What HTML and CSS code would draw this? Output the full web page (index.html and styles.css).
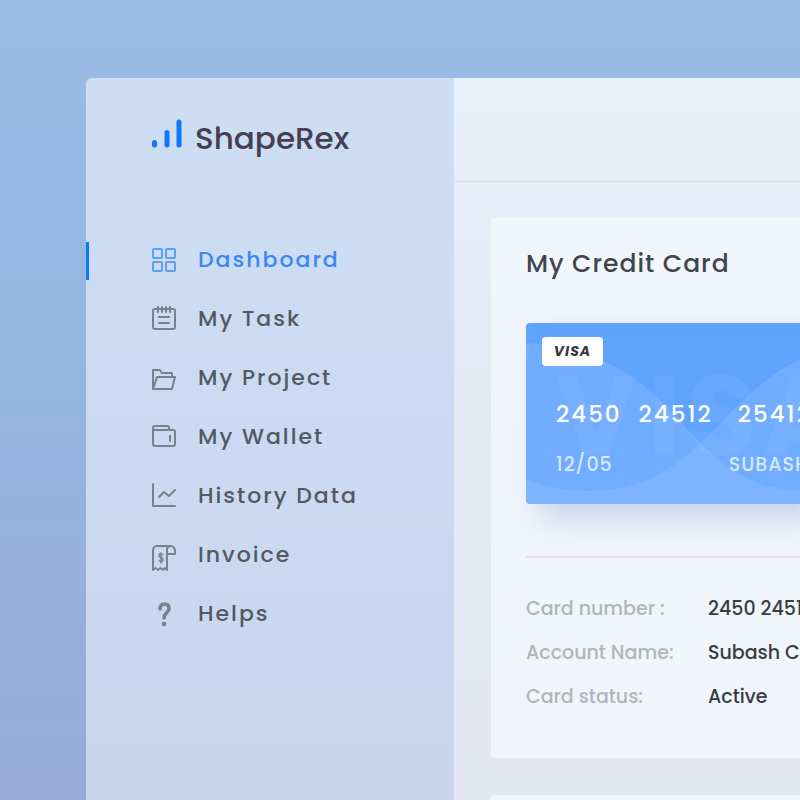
FILE: index.html
```html
<!DOCTYPE html>
<html lang="en">
<head>
<meta charset="utf-8">
<meta name="viewport" content="width=device-width, initial-scale=1">
<title>ShapeRex</title>
<link rel="stylesheet" href="styles.css">
</head>
<body>
<div class="window">
  <aside class="sidebar">
    <a class="brand" href="#">
      <svg class="brand-mark" viewBox="0 0 32 32" aria-hidden="true"><path d="M3.500 24.500v2.500M16 14.500v12.500M28 4v23"/></svg>
      <span>ShapeRex</span>
    </a>
    <nav class="menu">
      <a class="item active" href="#">
        <svg viewBox="0 0 26 26" aria-hidden="true"><rect x="2" y="2" width="9" height="9" rx="1"/><rect x="15" y="2" width="9" height="9" rx="1"/><rect x="2" y="15" width="9" height="9" rx="1"/><rect x="15" y="15" width="9" height="9" rx="1"/></svg>
        <span>Dashboard</span>
      </a>
      <a class="item" href="#">
        <svg viewBox="0 0 26 26" aria-hidden="true"><rect x="2" y="3" width="22" height="20" rx="2"/><path d="M7 1v5M11 1v5M15 1v5M19 1v5M8 11h10M8 17h10"/></svg>
        <span>My Task</span>
      </a>
      <a class="item" href="#">
        <svg viewBox="0 0 26 26" aria-hidden="true"><path d="M2 24V5h7l2 3h10v4M2 24l4-12h18l-3 12z"/></svg>
        <span>My Project</span>
      </a>
      <a class="item" href="#">
        <svg viewBox="0 0 26 26" aria-hidden="true"><path d="M2 4a2 2 0 0 1 2-2h12a2 2 0 0 1 2 2v2h4a2 2 0 0 1 2 2V20a2 2 0 0 1-2 2H4a2 2 0 0 1-2-2zM2 4q0 2 2 2h14M19 12v5"/></svg>
        <span>My Wallet</span>
      </a>
      <a class="item" href="#">
        <svg viewBox="0 0 26 26" aria-hidden="true"><path d="M2 1v22h22M8 14l5-5 5 4 6-6"/></svg>
        <span>History Data</span>
      </a>
      <a class="item" href="#">
        <svg viewBox="0 0 26 26" aria-hidden="true"><path d="M20 4H6a4 4 0 0 0-4 4v20l2.500-2 2.500 2 2.500-2 2.500 2 2-2 2 2V8q0-4 3.500-4T24 8v4h-8"/><path class="thin" d="M12 12.500q-4-2-4 1 0 1.500 2 2 2.500 1 2 3-1 2-4 0M10 11v10"/></svg>
        <span>Invoice</span>
      </a>
      <a class="item" href="#">
        <svg viewBox="0 0 26 26" aria-hidden="true"><path class="bold" d="M9 8q0-5 4.500-5T18 7.500c0 4-5 4-5 9.500"/><circle class="dot" cx="13" cy="23" r="2.300"/></svg>
        <span>Helps</span>
      </a>
    </nav>
  </aside>
  <div class="main">
    <header class="topbar"></header>
    <main class="content">
      <section class="panel">
        <h1>My Credit Card</h1>
        <div class="card">
          <svg class="card-art" viewBox="0 0 600 181" preserveAspectRatio="xMinYMin slice" aria-hidden="true">
            <path class="wave" d="M0 20C70 22 112 54 146 89C176 120 207 168 280 168S420 60 600 20V182H0z"/>
            <path class="wave" d="M0 156Q30 168 61 168C120 168 153 142 183 112C214 79 244 48 280 34S480 20 600 156V182H0z"/>
            <text class="watermark" x="29 122 161 236" y="132">VISA</text>
          </svg>
          <span class="visa">VISA</span>
          <div class="number"><span>2450</span><span>24512</span><span>25412</span></div>
          <div class="holder"><span>12/05</span><span>SUBASH</span></div>
        </div>
        <dl class="details">
          <dt>Card number :</dt><dd>2450 24512</dd>
          <dt>Account Name:</dt><dd>Subash Ch</dd>
          <dt>Card status:</dt><dd>Active</dd>
        </dl>
      </section>
      <section class="panel"></section>
    </main>
  </div>
</div>
</body>
</html>
```
FILE: styles.css
```css
* { box-sizing: border-box; }
body {
  margin: 0;
  height: 100vh;
  overflow: hidden;
  padding: 78px 0 0 86px;
  font-family: Poppins, Inter, sans-serif;
  font-weight: 500;
  background: linear-gradient(180deg, #99bbe6 0%, #95b5e1 50%, #96aad9 100%);
}
a { color: inherit; text-decoration: none; }
.window {
  display: flex;
  height: 100%;
  overflow: hidden;
  border-radius: 6px 0 0 0;
}
.sidebar {
  flex: 0 0 368px;
  background: linear-gradient(180deg, #cddef3, #cbdaf2 50%, #cad4ed);
}
.brand {
  display: flex;
  align-items: center;
  gap: 12px;
  height: 120px;
  padding-left: 65px;
  font-size: 31px;
  color: #463f52;
}
.brand-mark {
  width: 32px;
  height: 32px;
  margin-bottom: 8px;
  fill: none;
  stroke: #0f77fb;
  stroke-width: 5;
  stroke-linecap: round;
}
.menu { padding-top: 44px; }
.item {
  display: flex;
  align-items: center;
  gap: 21px;
  height: 38px;
  margin-bottom: 21px;
  padding: 0 0 4px 62px;
  border-left: 3px solid transparent;
  font-size: 22px;
  letter-spacing: 2px;
  color: #535961;
}
.item svg {
  width: 26px;
  height: 26px;
  margin-top: 2px;
  overflow: visible;
  fill: none;
  stroke: #77828f;
  stroke-width: 2;
  stroke-linejoin: round;
  stroke-linecap: round;
}
.item .thin { stroke-width: 1.5; }
.item .bold { stroke-width: 3.5; }
.item .dot { fill: #77828f; stroke: none; }
.item.active { border-color: #0f77fb; color: #3b86f7; }
.item.active svg { stroke: #5e9ff5; }
.main {
  flex: 1;
  min-width: 0;
  background: linear-gradient(180deg, #e9f1fb, #e5ebf6 30%, #e3e7f1);
}
.topbar { height: 104px; border-bottom: 1px solid #ead8d8; }
.content {
  display: flex;
  flex-direction: column;
  gap: 37px;
  padding: 36px 0 0 37px;
}
.panel {
  min-height: 40px;
  padding-left: 35px;
  border-radius: 4px 0 0 4px;
  background: linear-gradient(180deg, #f1f6fc, #f0f4fc 50%, #f1f5fb);
}
h1 {
  margin: 0;
  padding: 30px 0 43px;
  font-size: 25px;
  line-height: 32px;
  font-weight: 500;
  letter-spacing: 1px;
  color: #40454c;
}
.card {
  position: relative;
  height: 181px;
  padding: 14px 0 0 16px;
  border-radius: 4px 0 0 4px;
  background: #60a3ff;
  color: #fff;
  box-shadow: 16px 14px 30px rgba(110, 150, 200, .35);
  white-space: nowrap;
}
.card-art {
  position: absolute;
  top: 0;
  left: 0;
  width: 100%;
  height: 100%;
  border-radius: 4px 0 0 4px;
}
.wave { fill: #fff; fill-opacity: .1; }
.watermark { fill: #fff; fill-opacity: .05; font-size: 113px; font-weight: 700; }
.visa {
  position: relative;
  display: block;
  width: 61px;
  border-radius: 4px;
  background: #fff;
  color: #33383f;
  font-size: 14px;
  line-height: 29px;
  font-weight: 700;
  font-style: italic;
  letter-spacing: 1px;
  text-align: center;
}
.number, .holder {
  position: relative;
  display: flex;
  padding-left: 14px;
}
.number {
  gap: 17px;
  padding-top: 32px;
  font-size: 23px;
  line-height: 32px;
  letter-spacing: 2px;
}
.number span:nth-child(3) { margin-left: 8px; }
.holder {
  gap: 116px;
  padding-top: 21px;
  font-size: 19px;
  line-height: 28px;
  letter-spacing: 1px;
  color: #d8e8ff;
}
.details {
  display: grid;
  grid-template-columns: 182px 1fr;
  row-gap: 16px;
  margin: 52px 0 0;
  padding: 37px 0 47px;
  border-top: 2px solid #e9dfe2;
  font-size: 19px;
  line-height: 28px;
  white-space: nowrap;
}
dt { color: #b0b4bc; }
dd { margin: 0; color: #383d44; }
```
